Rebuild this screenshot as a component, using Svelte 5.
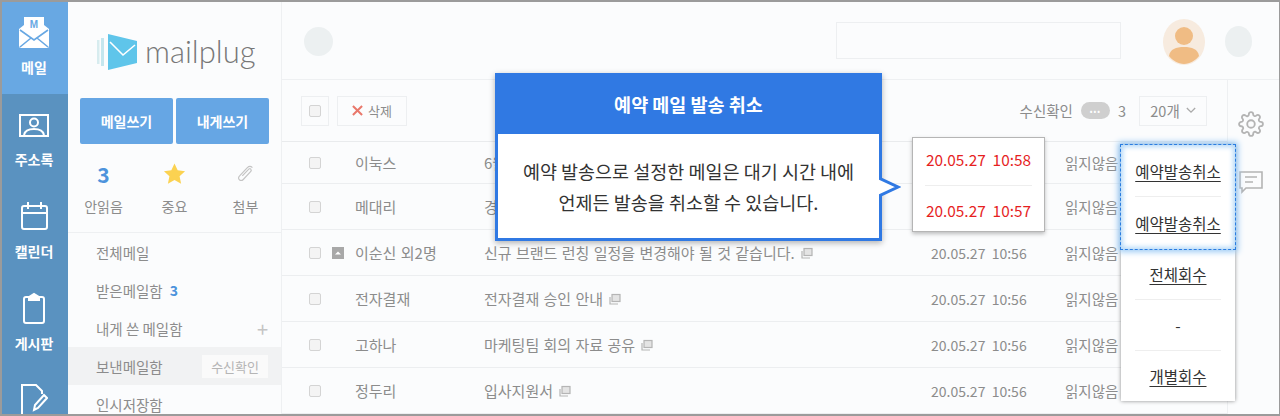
<script>
  const rows = [
    { name: '이눅스', subject: '6월 정기 회의 일정', sub: false, clip: false },
    { name: '메대리', subject: '경영지원팀 공지', sub: false, clip: false },
    { name: '이순신 외2명', subject: '신규 브랜드 런칭 일정을 변경해야 될 것 같습니다.', sub: true, clip: true },
    { name: '전자결재', subject: '전자결재 승인 안내', sub: false, clip: true },
    { name: '고하나', subject: '마케팅팀 회의 자료 공유', sub: false, clip: true },
    { name: '정두리', subject: '입사지원서', sub: false, clip: true }
  ];
  const menu = ['전체메일', '받은메일함', '내게 쓴 메일함', '보낸메일함', '인시저장함'];
</script>

{#snippet copyIcon()}
  <svg class="copy" viewBox="0 0 12 12" width="12" height="12" fill="none" stroke="#b5b5b5" stroke-width="1.2">
    <rect x="3" y="1.5" width="8" height="7" fill="#e4e4e4" />
    <path d="M1 4v7h8" />
  </svg>
{/snippet}

<div class="frame">
  <nav class="rail">
    <div class="rail-item active">
      <div class="ico">
        <svg viewBox="0 0 30 32" width="30" height="32">
          <path d="M0 13l5-4V1h20v8l5 4v17a2 2 0 0 1-2 2H2a2 2 0 0 1-2-2z" fill="#fff" />
          <path d="M1 14l14 10 14-10M1 31l11-9M29 31l-11-9" fill="none" stroke="#68a8e3" stroke-width="1.600" />
          <text x="15" y="12" class="m">M</text>
        </svg>
      </div>
      <span>메일</span>
    </div>
    <div class="rail-item">
      <div class="ico low">
        <svg viewBox="0 0 30 23" width="30" height="23" fill="none" stroke="#fff" stroke-width="2">
          <rect x="1" y="1" width="28" height="21" />
          <circle cx="15" cy="8.500" r="4" />
          <path d="M5 21c1-5 6-6 10-6s9 1 10 6" />
        </svg>
      </div>
      <span>주소록</span>
    </div>
    <div class="rail-item">
      <div class="ico">
        <svg viewBox="0 0 27 28" width="27" height="28" fill="none" stroke="#fff" stroke-width="2">
          <rect x="1" y="4" width="25" height="23" rx="2" />
          <path d="M1 11h25M7 0v7M20 0v7" />
        </svg>
      </div>
      <span>캘린더</span>
    </div>
    <div class="rail-item">
      <div class="ico">
        <svg viewBox="0 0 24 32" width="24" height="32" fill="none" stroke="#fff" stroke-width="2">
          <rect x="2" y="5" width="20" height="26" rx="2" />
          <path d="M7 5l5-3 5 3v3H7z" fill="#fff" />
        </svg>
      </div>
      <span>게시판</span>
    </div>
    <div class="rail-item">
      <div class="ico">
        <svg viewBox="0 0 28 32" width="28" height="32" fill="none" stroke="#fff" stroke-width="2">
          <path d="M22 10V7l-6-6H2v30h20" />
          <path d="M14 26l1-5 9-10 3 3-9 10z" />
        </svg>
      </div>
    </div>
  </nav>

  <aside class="side">
    <div class="logo">
      <svg viewBox="0 0 40 36" width="40" height="36">
        <rect x="0" y="6" width="2.500" height="24" fill="#d7ecef" />
        <rect x="4" y="4" width="3" height="28" fill="#c4e6ee" />
        <path d="M11 0l29 7v22l-29 7z" fill="#5fc5ea" />
        <path d="M13 8l13 13 12-10" fill="none" stroke="#fff" stroke-width="1.600" />
      </svg>
      <span>mailplug</span>
    </div>
    <div class="compose">
      <button>메일쓰기</button>
      <button>내게쓰기</button>
    </div>
    <div class="stats">
      <div class="stat"><b>3</b><span>안읽음</span></div>
      <div class="stat">
        <svg viewBox="0 0 24 24" width="23" height="23"><path d="M12 1l3.300 7.200 7.700.9-5.700 5.300 1.600 7.800L12 18.300l-6.900 3.900 1.600-7.800L1 9.100l7.700-.9z" fill="#fbd251" /></svg>
        <span>중요</span>
      </div>
      <div class="stat">
        <svg viewBox="0 0 24 24" width="22" height="22" fill="none" stroke="#c4c4c4" stroke-width="1.300"><path d="M19 5c-2-2-4-1.500-5.500 0L5 14c-1.500 1.500-1.500 3.500 0 4.500s3 .5 4-.5l8-8.500c1-1 1-2 .2-2.800s-1.800-.5-2.700.5L8 14" /></svg>
        <span>첨부</span>
      </div>
    </div>
    <ul class="menu">
      {#each menu as item, i}
        <li class:current={i === 3}>
          <span>{item}</span>
          {#if i === 1}<b class="count">3</b>{/if}
          {#if i === 2}<em class="plus">+</em>{/if}
          {#if i === 3}<small>수신확인</small>{/if}
        </li>
      {/each}
    </ul>
  </aside>

  <main class="main">
    <header class="top">
      <i class="dot"></i>
      <div class="search"></div>
      <div class="avatar">
        <svg viewBox="0 0 42 46" width="42" height="46">
          <ellipse cx="21" cy="23" rx="21" ry="23" fill="#f7ebdf" />
          <circle cx="21" cy="17" r="9" fill="#f0bc84" />
          <path d="M6 37c1-7 7-9 15-9s14 2 15 9c-3 4-9 8-15 8S9 41 6 37z" fill="#f0bc84" />
        </svg>
      </div>
      <i class="dot last"></i>
    </header>
    <div class="body">
      <section class="list">
        <div class="toolbar">
          <div class="check-btn"><i class="box"></i></div>
          <div class="del">
            <svg viewBox="0 0 12 12" width="11" height="11" fill="none" stroke="#e9786b" stroke-width="2.200"><path d="M1 1l10 10M11 1L1 11" /></svg>
            <span>삭제</span>
          </div>
          <div class="read">
            <span>수신확인</span>
            <span class="pill">•••</span>
            <span>3</span>
          </div>
          <div class="size">
            <span>20개</span>
            <svg viewBox="0 0 12 8" width="10" height="7" fill="none" stroke="#aaa" stroke-width="1.600"><path d="M1 1l5 5 5-5" /></svg>
          </div>
        </div>
        {#each rows as r, i}
          <div class="row" class:first={i === 0}>
            <i class="box"></i>
            <span class="flag">{#if r.sub}<svg viewBox="0 0 12 12" width="12" height="12"><rect width="12" height="12" fill="#a8a8a8" /><path d="M3 7.500l3-3 3 3z" fill="#fff" /></svg>{/if}</span>
            <span class="name">{r.name}</span>
            <span class="subject">{r.subject}{#if r.clip}{@render copyIcon()}{/if}</span>
            <span class="date">20.05.27&nbsp;&nbsp;10:56</span>
            <span class="status">읽지않음</span>
          </div>
        {/each}
      </section>
      <div class="tools">
        <svg viewBox="0 0 24 24" width="26" height="26" fill="none" stroke="#b4b4b4" stroke-width="1.700">
          <circle cx="12" cy="12" r="3.500" />
          <path d="M19.400 15a1.650 1.650 0 0 0 .33 1.820l.06.06a2 2 0 0 1 0 2.830 2 2 0 0 1-2.830 0l-.06-.06a1.650 1.650 0 0 0-1.820-.33 1.650 1.650 0 0 0-1 1.510V21a2 2 0 0 1-2 2 2 2 0 0 1-2-2v-.09A1.650 1.650 0 0 0 9 19.400a1.650 1.650 0 0 0-1.820.33l-.06.06a2 2 0 0 1-2.830 0 2 2 0 0 1 0-2.830l.06-.06a1.650 1.650 0 0 0 .33-1.820 1.650 1.650 0 0 0-1.510-1H3a2 2 0 0 1-2-2 2 2 0 0 1 2-2h.09A1.650 1.650 0 0 0 4.600 9a1.650 1.650 0 0 0-.33-1.820l-.06-.06a2 2 0 0 1 0-2.830 2 2 0 0 1 2.830 0l.06.06a1.650 1.650 0 0 0 1.820.33H9a1.650 1.650 0 0 0 1-1.510V3a2 2 0 0 1 2-2 2 2 0 0 1 2 2v.09a1.650 1.650 0 0 0 1 1.510 1.650 1.650 0 0 0 1.820-.33l.06-.06a2 2 0 0 1 2.830 0 2 2 0 0 1 0 2.830l-.06.06a1.650 1.650 0 0 0-.33 1.820V9a1.650 1.650 0 0 0 1.510 1H21a2 2 0 0 1 2 2 2 2 0 0 1-2 2h-.09a1.650 1.650 0 0 0-1.510 1z" />
        </svg>
        <svg viewBox="0 0 24 24" width="24" height="24" fill="none" stroke="#b4b4b4" stroke-width="1.600">
          <path d="M1 2h22v16H7l-4 4v-4H1z" />
          <path d="M6 7h12M6 12h8" />
        </svg>
      </div>
    </div>
  </main>

  <div class="dialog">
    <h2>예약 메일 발송 취소</h2>
    <p>예약 발송으로 설정한 메일은 대기 시간 내에<br />언제든 발송을 취소할 수 있습니다.</p>
    <svg class="arrow" viewBox="0 0 22 22" width="22" height="22">
      <path d="M0 2l19 9L0 20" fill="#fff" stroke="#3079e3" stroke-width="3" />
    </svg>
  </div>

  <div class="dates">
    <div>20.05.27&nbsp;&nbsp;10:58</div>
    <div>20.05.27&nbsp;&nbsp;10:57</div>
  </div>

  <div class="actions">
    <div class="hl">
      <a href="#a">예약발송취소</a>
      <a href="#a">예약발송취소</a>
    </div>
    <div class="rest">
      <a href="#a">전체회수</a>
      <span>-</span>
      <a href="#a">개별회수</a>
    </div>
  </div>
</div>

<style>
  :global(body) { margin: 0; }
  .frame {
    position: relative;
    width: 1280px;
    height: 416px;
    box-sizing: border-box;
    border: 2px solid #9b9b9b;
    border-right-width: 1px;
    display: flex;
    overflow: hidden;
    background: #fbfcfd;
    font-family: "Noto Sans CJK KR", "Noto Sans", sans-serif;
    color: #8c8c8c;
    font-size: 14px;
  }
  .rail { width: 66px; flex: none; background: #5a92c0; display: flex; flex-direction: column; }
  .rail-item { height: 92px; flex: none; box-sizing: border-box; padding: 12px 2px 0 0; display: flex; flex-direction: column; align-items: center; gap: 7px; color: #fff; font-weight: 700; font-size: 14px; line-height: 20px; }
  .rail-item.active { background: #68a8e3; }
  .ico { height: 36px; flex: none; display: flex; align-items: center; justify-content: center; }
  .ico.low { padding-top: 3px; box-sizing: border-box; }
  .rail-item svg { display: block; }
  .m { font: 700 10px "Liberation Sans", sans-serif; fill: #68a8e3; text-anchor: middle; }

  .side { width: 214px; flex: none; box-sizing: border-box; border-right: 1px solid #eef0f2; display: flex; flex-direction: column; }
  .logo { height: 96px; flex: none; box-sizing: border-box; padding: 4px 0 0 29px; display: flex; align-items: center; gap: 8px; }
  .logo span { font-family: Lato, sans-serif; font-weight: 300; font-size: 31px; color: #777; line-height: 1; padding-bottom: 2px; }
  .compose { display: flex; flex: none; gap: 3px; padding-left: 12px; }
  .compose button { width: 93px; height: 46px; border: 0; border-radius: 2px; background: #66a6e4; color: #fff; font: 700 14px "Noto Sans CJK KR", sans-serif; padding: 0; }
  .stats { display: grid; flex: none; grid-template-columns: 71px 71px 71px; padding-top: 16px; height: 89px; box-sizing: border-box; border-bottom: 1px solid #eef0f2; }
  .stat { display: flex; flex-direction: column; align-items: center; gap: 7px; font-size: 14px; line-height: 22px; }
  .stat b { color: #4c93dc; font-size: 21px; line-height: 28px; height: 28px; }
  .stat svg { height: 28px; }
  .menu { list-style: none; margin: 0; padding: 0; }
  .menu li { height: 38px; display: flex; align-items: center; gap: 7px; padding: 0 13px 0 28px; font-size: 14.500px; }
  .menu li.current { background: #f1f2f3; }
  .count { color: #4c93dc; font-size: 14px; }
  .plus { margin-left: auto; font-style: normal; font-size: 20px; color: #c4c4c4; }
  .menu small { margin-left: auto; background: #fafafa; color: #b5b5b5; font-size: 13px; padding: 0 9px; height: 23px; line-height: 23px; }

  .main { flex: 1; min-width: 0; display: flex; flex-direction: column; }
  .top { height: 78px; flex: none; box-sizing: border-box; border-bottom: 1px solid #eef0f2; display: flex; align-items: center; padding: 0 0 0 22px; }
  .dot { width: 29px; height: 29px; border-radius: 50%; background: #ecf0f1; margin-top: 2px; flex: none; }
  .dot.last { width: 27px; height: 31px; }
  .search { width: 285px; height: 37px; flex: none; box-sizing: border-box; border: 1px solid #edeff1; margin-left: 503px; }
  .avatar { margin-left: 42px; margin-right: 20px; height: 46px; margin-top: 3px; flex: none; }
  .body { flex: 1; display: flex; min-height: 0; }
  .list { width: 945px; flex: none; }
  .toolbar { height: 62px; box-sizing: border-box; border-bottom: 1px solid #e9ebed; display: flex; align-items: center; padding: 0 20px 0 19px; }
  .check-btn { width: 28px; height: 30px; box-sizing: border-box; border: 1px solid #edeff1; display: flex; align-items: center; justify-content: center; }
  .del { margin-left: 8px; width: 70px; height: 30px; box-sizing: border-box; border: 1px solid #edeff1; display: flex; align-items: center; justify-content: center; gap: 5px; font-size: 13px; }
  .read { margin-left: auto; display: flex; align-items: center; gap: 8px; font-size: 14.500px; }
  .pill { width: 29px; height: 17px; border-radius: 9px; background: #cfcfcf; color: #fff; font-size: 8px; line-height: 17px; text-align: center; letter-spacing: 1px; }
  .size { margin-left: 13px; width: 68px; height: 30px; box-sizing: border-box; border: 1px solid #edeff1; display: flex; align-items: center; justify-content: center; gap: 6px; font-size: 14.500px; }
  .box { display: block; width: 12px; height: 12px; box-sizing: border-box; border: 1px solid #d4d4d4; border-radius: 2px; background: #f4f4f4; flex: none; }
  .row { height: 46px; box-sizing: border-box; border-bottom: 1px solid #eceef0; display: grid; grid-template-columns: 23px 23px 129px 447px 134px 1fr; align-items: center; padding-left: 27px; white-space: nowrap; font-size: 15px; word-spacing: 1px; }
  .row.first { height: 42px; }
  .flag { display: flex; align-items: center; }
  .subject { display: flex; align-items: center; gap: 6px; }
  .copy { flex: none; }
  .date { word-spacing: 0; font-size: 14px; }
  .status { font-size: 14.500px; }
  .tools { flex: 1; border-left: 1px solid #eef0f2; display: flex; flex-direction: column; align-items: center; padding: 31px 5px 0 0; gap: 33px; }
  .tools svg { display: block; }

  .dialog { position: absolute; left: 493px; top: 71px; width: 387px; height: 168px; box-sizing: border-box; border: 3px solid #3079e3; background: #fff; box-shadow: 0 2px 6px rgba(0,0,0,.3); text-align: center; }
  .dialog h2 { margin: 0; height: 58px; background: #3079e3; color: #fff; font-size: 18.500px; font-weight: 700; line-height: 56px; }
  .dialog p { margin: 0; padding-top: 22px; color: #333; font-size: 18.500px; line-height: 31px; white-space: nowrap; }
  .arrow { position: absolute; left: 381px; top: 100px; }

  .dates { position: absolute; left: 910px; top: 135px; width: 133px; height: 95px; box-sizing: border-box; background: #fff; border: 1px solid #b5b5b5; box-shadow: 0 2px 4px rgba(0,0,0,.25); color: #e61f1f; font-size: 15.400px; text-align: center; padding: 0 12px; }
  .dates div { height: 46.500px; line-height: 43px; white-space: nowrap; }
  .dates div:last-child { line-height: 48px; }
  .dates div:first-child { border-bottom: 1px solid #eee; }

  .actions { position: absolute; left: 1119px; top: 143px; width: 114px; height: 256px; box-sizing: border-box; background: #fff; box-shadow: 0 0 4px rgba(0,0,0,.45); text-align: center; color: #333; font-size: 15.500px; }
  .actions a { color: #333; text-decoration: underline; }
  .hl { height: 104px; box-sizing: border-box; outline: 1px dashed #2a7de1; box-shadow: 0 0 6px 3px #9ccbf5, inset 0 0 5px 2px #b5d9f8; display: flex; flex-direction: column; background: #fff; position: relative; }
  .hl a { height: 51px; line-height: 52px; margin: 0 14px; text-underline-offset: 3px; }
  .hl a:first-child { box-sizing: border-box; height: 52px; line-height: 52px; border-bottom: 1px solid #eee; }
  .rest { display: flex; flex-direction: column; margin: 0 14px; }
  .rest a, .rest span { height: 51px; line-height: 50px; box-sizing: border-box; text-underline-offset: 3px; }
  .rest a:first-child, .rest span { border-bottom: 1px solid #eee; }
</style>
